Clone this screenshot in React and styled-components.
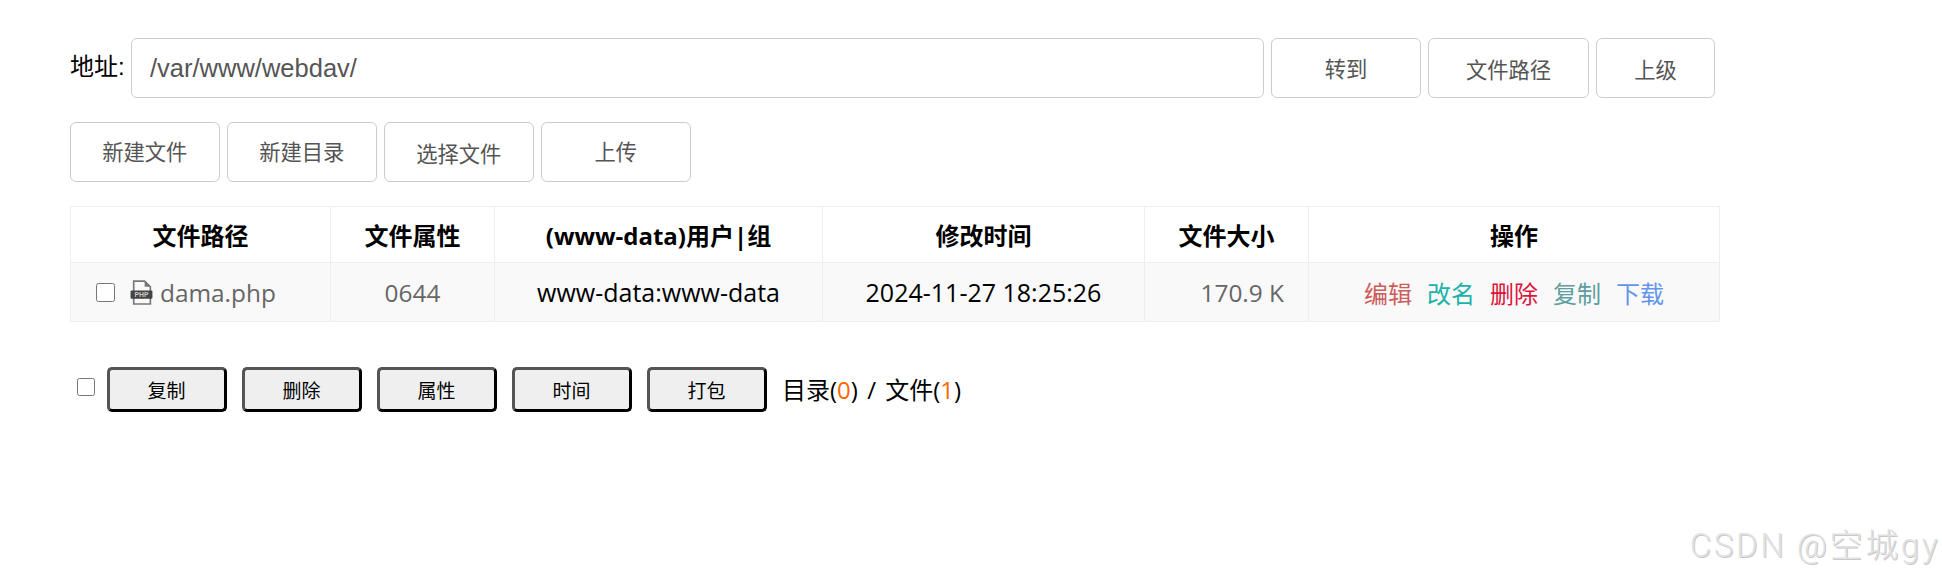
import React from 'react';
import styled, { createGlobalStyle } from 'styled-components';

const Global = createGlobalStyle`
  html, body {
    margin: 0;
    padding: 0;
    background: #fff;
    font-family: "Open Sans", "Noto Sans CJK SC", sans-serif;
    color: #000;
  }
  * { box-sizing: border-box; }
`;

const Page = styled.div`
  position: relative;
  width: 1942px;
  height: 579px;
  overflow: hidden;
  padding: 38px 0 0 70px;
`;

const AddressRow = styled.div`
  display: flex;
  align-items: center;
  height: 60px;
`;

const AddressLabel = styled.label`
  width: 61px;
  padding-bottom: 8px;
  font-size: 24px;
  font-family: "Liberation Sans", "Noto Sans CJK SC", sans-serif;
`;

const AddressInput = styled.input`
  width: 1133px;
  height: 60px;
  padding: 0 18px;
  border: 1.5px solid #ccc;
  border-radius: 6px;
  color: #555;
  font-size: 25.5px;
  font-family: "Liberation Sans", sans-serif;
  outline: none;
`;

const Button = styled.button`
  width: ${(p) => p.$width || 149.5}px;
  height: 60px;
  margin-left: ${(p) => p.$gap ?? 7.5}px;
  padding: ${(p) => p.$drop || 0}px 0 ${(p) => p.$rise ?? 2}px;
  border: 1.5px solid #ccc;
  border-radius: 6px;
  background: #fff;
  color: #555;
  font-size: 21.3px;
  font-family: "Noto Sans CJK SC", sans-serif;
  font-weight: 400;
`;

const ToolRow = styled.div`
  display: flex;
  margin-top: 24px;
  height: 60px;
`;

const FileTable = styled.table`
  width: 1649px;
  margin-top: 24px;
  border-collapse: collapse;
  table-layout: fixed;
`;

const Th = styled.th`
  height: 56px;
  border: 1px solid #eee;
  padding: 0;
  font-size: 24px;
  font-weight: 700;
  text-align: center;
  width: ${(p) => p.$width}px;
`;

const Td = styled.td`
  height: 59px;
  border: 1px solid #eee;
  background: #f9f9f9;
  padding: 0 ${(p) => p.$pad || 0}px;
  font-size: ${(p) => (p.$muted ? 24.4 : 25)}px;
  color: ${(p) => (p.$muted ? '#666' : '#000')};
  text-align: ${(p) => p.$align || 'center'};
`;

const NameCell = styled.div`
  display: flex;
  align-items: center;
`;

const RowCheck = styled.input.attrs({ type: 'checkbox' })`
  width: 19px;
  height: 19px;
  margin: 0 15px 0 0;
`;

const FileIcon = styled.svg`
  width: 23px;
  height: 25px;
  margin-right: 7px;
  flex: none;
`;

const Actions = styled.div`
  display: flex;
  justify-content: center;
  gap: 15px;
`;

const ActionLink = styled.a`
  color: ${(p) => p.$color};
  font-family: "Noto Sans CJK SC", sans-serif;
  font-size: 24px;
  font-weight: 400;
`;

const BatchRow = styled.div`
  display: flex;
  align-items: center;
  margin-top: 45px;
  height: 45px;
`;

const BatchCheck = styled.input.attrs({ type: 'checkbox' })`
  width: 18px;
  height: 18px;
  margin: -6px 12px 0 7px;
`;

const BatchButton = styled.button`
  width: 120px;
  height: 45px;
  margin-right: 15px;
  padding: 0 1px 0 0;
  border: 3px outset #000;
  border-color: #555 #000 #000 #555;
  border-radius: 5px;
  background: #efefef;
  color: #000;
  font-size: 19px;
  font-family: "Noto Sans CJK SC", sans-serif;
  font-weight: 400;
`;

const Summary = styled.span`
  margin: -3px 0 0 0;
  font-size: 24px;
  word-spacing: 3px;
`;

const Count = styled.span`
  color: #f60;
`;

const Watermark = styled.div`
  position: absolute;
  right: 2px;
  bottom: 12px;
  color: #e2e2e2;
  font-size: 33px;
  font-weight: 300;
  font-family: Roboto, "Noto Sans CJK SC", sans-serif;
  letter-spacing: 2.6px;
  text-shadow: 1px 1px 0 #c8c8c8;
  white-space: nowrap;
`;

const actions = [
  ['编辑', 'indianred'],
  ['改名', 'lightseagreen'],
  ['删除', 'crimson'],
  ['复制', 'cadetblue'],
  ['下载', 'cornflowerblue'],
];

const PhpIcon = () => (
  <FileIcon viewBox="0 0 22 24">
    <path d="M3.5 1h10.5l5.5 5.5v16.500H3.500z" fill="none" stroke="#777" strokeWidth="1.6" />
    <path d="M14 1v5.500h5.500z" fill="#777" />
    <rect x="0.5" y="10" width="21" height="8" rx="1" fill="#444" />
    <text x="11" y="16.5" fontSize="6.5" fontWeight="700" textAnchor="middle" fill="#ccc" fontFamily="Liberation Sans">
      PHP
    </text>
  </FileIcon>
);

const App = () => (
  <Page>
    <Global />
    <AddressRow>
      <AddressLabel>地址:</AddressLabel>
      <AddressInput defaultValue="/var/www/webdav/" />
      <Button $width={150} $gap={7}>转到</Button>
      <Button $width={161} $gap={7} $drop={2}>文件路径</Button>
      <Button $width={119} $gap={7} $drop={2}>上级</Button>
    </AddressRow>
    <ToolRow>
      <Button $gap={0} $rise={4}>新建文件</Button>
      <Button $rise={4}>新建目录</Button>
      <Button $drop={4} $rise={4}>选择文件</Button>
      <Button $rise={4}>上传</Button>
    </ToolRow>
    <FileTable>
      <thead>
        <tr>
          <Th $width={260}>文件路径</Th>
          <Th $width={164}>文件属性</Th>
          <Th $width={328}>(www-data)用户|组</Th>
          <Th $width={322}>修改时间</Th>
          <Th $width={164}>文件大小</Th>
          <Th $width={411}>操作</Th>
        </tr>
      </thead>
      <tbody>
        <tr>
          <Td $align="left" $pad={25} $muted>
            <NameCell>
              <RowCheck />
              <PhpIcon />
              dama.php
            </NameCell>
          </Td>
          <Td $muted>0644</Td>
          <Td>www-data:www-data</Td>
          <Td>2024-11-27 18:25:26</Td>
          <Td $align="right" $pad={24} $muted>170.9 K</Td>
          <Td>
            <Actions>
              {actions.map(([label, color]) => (
                <ActionLink key={label} $color={color}>{label}</ActionLink>
              ))}
            </Actions>
          </Td>
        </tr>
      </tbody>
    </FileTable>
    <BatchRow>
      <BatchCheck />
      {['复制', '删除', '属性', '时间', '打包'].map((label) => (
        <BatchButton key={label}>{label}</BatchButton>
      ))}
      <Summary>
        目录(<Count>0</Count>) / 文件(<Count>1</Count>)
      </Summary>
    </BatchRow>
    <Watermark>CSDN @空城gy</Watermark>
  </Page>
);

export default App;
